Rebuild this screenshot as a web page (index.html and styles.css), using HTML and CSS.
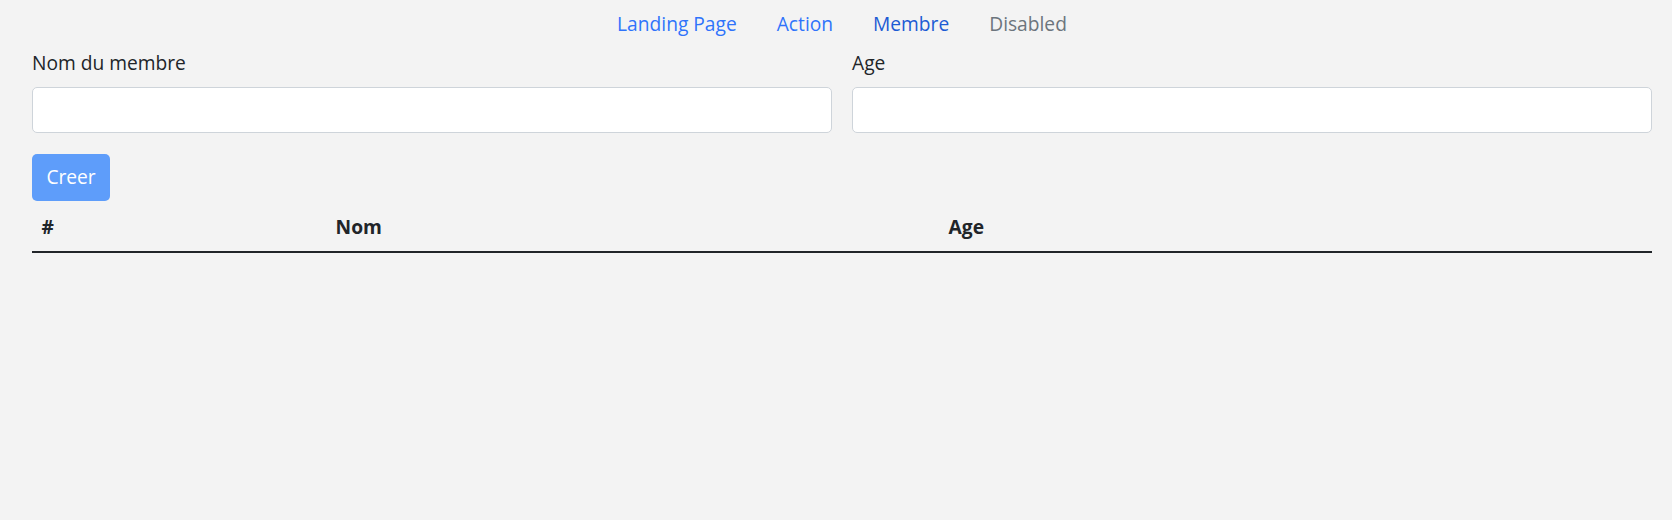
FILE: index.html
```html
<!DOCTYPE html>
<html lang="fr">
<head>
<meta charset="utf-8">
<title>Membres</title>
<link rel="stylesheet" href="styles.css">
</head>
<body>
<div class="page">
  <nav class="nav">
    <a class="nav-link" href="#">Landing Page</a>
    <a class="nav-link" href="#">Action</a>
    <a class="nav-link active" href="#">Membre</a>
    <span class="nav-link disabled">Disabled</span>
  </nav>
  <form class="form">
    <div class="form-grid">
      <div class="field">
        <label class="form-label">Nom du membre</label>
        <input class="form-control" type="text">
      </div>
      <div class="field">
        <label class="form-label">Age</label>
        <input class="form-control" type="text">
      </div>
    </div>
    <div class="actions">
      <button class="btn" type="button" disabled>Creer</button>
    </div>
  </form>
  <table class="table">
    <colgroup>
      <col class="col-id">
      <col class="col-nom">
      <col class="col-age">
    </colgroup>
    <thead>
      <tr><th>#</th><th>Nom</th><th>Age</th></tr>
    </thead>
    <tbody></tbody>
  </table>
</div>
</body>
</html>
```

FILE: styles.css
```css
html, body {
  margin: 0;
  padding: 0;
}
body {
  background: #f3f3f3;
  color: #212529;
  font-family: "Open Sans", "Noto Sans", "Liberation Sans", sans-serif;
  font-size: 19.2px;
  line-height: 28.8px;
}
.page {
  padding: 0 20px 0 32px;
}
.nav {
  display: flex;
  justify-content: center;
}
.nav-link {
  display: block;
  padding: 9.6px 20px 10.4px;
  color: #2f73fb;
  text-decoration: none;
}
.nav-link.active {
  color: #1c5bd4;
}
.nav-link.disabled {
  color: #6c757d;
}
.form-grid {
  display: grid;
  grid-template-columns: 1fr 1fr;
  column-gap: 20px;
}
.field {
  display: flex;
  flex-direction: column;
}
.form-label {
  display: block;
  margin-bottom: 9.6px;
}
.form-control {
  box-sizing: border-box;
  height: 46px;
  margin: 0;
  border: 1px solid #ced4da;
  border-radius: 5px;
  background: #ffffff;
  font: inherit;
  padding: 0 14px;
}
.actions {
  margin-top: 21px;
}
.btn {
  box-sizing: border-box;
  height: 47px;
  padding: 0 14.4px;
  border: 0;
  border-radius: 5px;
  background: #5e9dfa;
  color: #ffffff;
  font: inherit;
  line-height: 28.8px;
}
.table {
  width: 100%;
  border-collapse: collapse;
  table-layout: fixed;
}
.col-id { width: 294px; }
.col-nom { width: 613px; }
.table th {
  text-align: left;
  font-weight: 700;
  padding: 12px 9.6px 9px;
  line-height: 28.8px;
  border-bottom: 2px solid #212529;
}
```
